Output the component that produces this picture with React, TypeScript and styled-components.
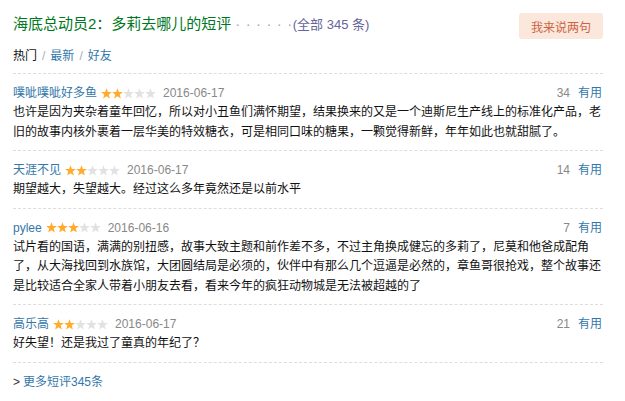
import React from "react";
import styled, { createGlobalStyle } from "styled-components";

const GlobalStyle = createGlobalStyle`
  html, body { margin: 0; padding: 0; background: #fff; }
  body {
    font-family: "Liberation Sans", Arial, "Noto Sans CJK SC", sans-serif;
    font-size: 12px;
    color: #111;
  }
  a { text-decoration: none; }
`;

const Page = styled.div`
  width: 590px;
  margin-left: 13px;
  padding-top: 13px;
`;

const Header = styled.div`
  display: flex;
  justify-content: space-between;
  align-items: flex-start;
  height: 26px;
`;

const Title = styled.h2`
  margin: 0;
  font-size: 15px;
  font-weight: normal;
  line-height: 22px;
  color: #007722;
  display: flex;
  align-items: baseline;
  white-space: pre;
`;

const Dots = styled.span`
  color: #aaa;
  margin-left: 4px;
  letter-spacing: 0.6px;
  font-size: 15px;
`;

const AllCount = styled.span`
  color: #666699;
  font-size: 13px;
  margin-left: 0;
`;

const SayButton = styled.a`
  display: inline-flex;
  align-items: center;
  justify-content: center;
  height: 26px;
  padding: 0 12px;
  border-radius: 3px;
  background: #fbe7db;
  color: #ca6445;
  font-size: 12px;
`;

const Tabs = styled.div`
  margin-top: 7px;
  line-height: 20px;
  font-size: 12px;
  padding-bottom: 7px;
  border-bottom: 1px dashed #ddd;
`;

const TabCurrent = styled.span`
  color: #111;
`;

const Sep = styled.span`
  color: #aab;
  margin: 0 5px;
`;

const TabLink = styled.a`
  color: #3377aa;
`;

const Item = styled.div`
  padding: 8px 0;
  border-bottom: 1px dashed #ddd;
`;

const InfoRow = styled.div`
  display: flex;
  align-items: center;
  justify-content: space-between;
  height: 20px;
  line-height: 20px;
  margin-top: 1px;
`;

const Left = styled.div`
  display: flex;
  align-items: center;
`;

const UserName = styled.a`
  color: #3377aa;
`;

const StarBox = styled.span`
  display: inline-flex;
  margin-left: 4px;
`;

const DateText = styled.span`
  color: #888;
  margin-left: 7px;
`;

const Votes = styled.div`
  display: flex;
  align-items: center;
  margin-right: 1px;
`;

const VoteCount = styled.span`
  color: #888;
  margin-right: 8px;
`;

const Useful = styled.a`
  color: #3377aa;
`;

const Content = styled.p`
  margin: 0;
  line-height: 19.5px;
  color: #111;
`;

const More = styled.div`
  margin-top: 9px;
  line-height: 20px;
  color: #333;
`;

const MoreLink = styled.a`
  color: #3377aa;
  margin-left: 3px;
`;

const STAR =
  "M5.5 0.2 L6.9 3.9 L10.9 4.05 L7.75 6.5 L8.85 10.4 L5.5 8.2 L2.15 10.4 L3.25 6.5 L0.1 4.05 L4.1 3.9 Z";

const Stars: React.FC<{ value: number }> = ({ value }) => (
  <StarBox>
    <svg width="55" height="11" viewBox="0 0 55 11">
      {[0, 1, 2, 3, 4].map((i) => (
        <path
          key={i}
          d={STAR}
          transform={`translate(${i * 11} 0)`}
          fill={i < value ? "#ffac2d" : "#e2e2e2"}
        />
      ))}
    </svg>
  </StarBox>
);

type Review = {
  user: string;
  stars: number;
  date: string;
  votes: number;
  text: string;
};

const reviews: Review[] = [
  {
    user: "噗呲噗呲好多鱼",
    stars: 2,
    date: "2016-06-17",
    votes: 34,
    text:
      "也许是因为夹杂着童年回忆，所以对小丑鱼们满怀期望，结果换来的又是一个迪斯尼生产线上的标准化产品，老旧的故事内核外裹着一层华美的特效糖衣，可是相同口味的糖果，一颗觉得新鲜，年年如此也就甜腻了。",
  },
  {
    user: "天涯不见",
    stars: 2,
    date: "2016-06-17",
    votes: 14,
    text: "期望越大，失望越大。经过这么多年竟然还是以前水平",
  },
  {
    user: "pylee",
    stars: 3,
    date: "2016-06-16",
    votes: 7,
    text:
      "试片看的国语，满满的别扭感，故事大致主题和前作差不多，不过主角换成健忘的多莉了，尼莫和他爸成配角了，从大海找回到水族馆，大团圆结局是必须的，伙伴中有那么几个逗逼是必然的，章鱼哥很抢戏，整个故事还是比较适合全家人带着小朋友去看，看来今年的疯狂动物城是无法被超越的了",
  },
  {
    user: "高乐高",
    stars: 2,
    date: "2016-06-17",
    votes: 21,
    text: "好失望！还是我过了童真的年纪了？",
  },
];

export default function App() {
  return (
    <>
      <GlobalStyle />
      <Page>
        <Header>
          <Title>
            海底总动员2：多莉去哪儿的短评
            <Dots>· · · · · ·</Dots>
            <AllCount>(全部 345 条)</AllCount>
          </Title>
          <SayButton>我来说两句</SayButton>
        </Header>
        <Tabs>
          <TabCurrent>热门</TabCurrent>
          <Sep>/</Sep>
          <TabLink>最新</TabLink>
          <Sep>/</Sep>
          <TabLink>好友</TabLink>
        </Tabs>
        {reviews.map((r) => (
          <Item key={r.user}>
            <InfoRow>
              <Left>
                <UserName>{r.user}</UserName>
                <Stars value={r.stars} />
                <DateText>{r.date}</DateText>
              </Left>
              <Votes>
                <VoteCount>{r.votes}</VoteCount>
                <Useful>有用</Useful>
              </Votes>
            </InfoRow>
            <Content>{r.text}</Content>
          </Item>
        ))}
        <More>
          &gt;<MoreLink>更多短评345条</MoreLink>
        </More>
      </Page>
    </>
  );
}
